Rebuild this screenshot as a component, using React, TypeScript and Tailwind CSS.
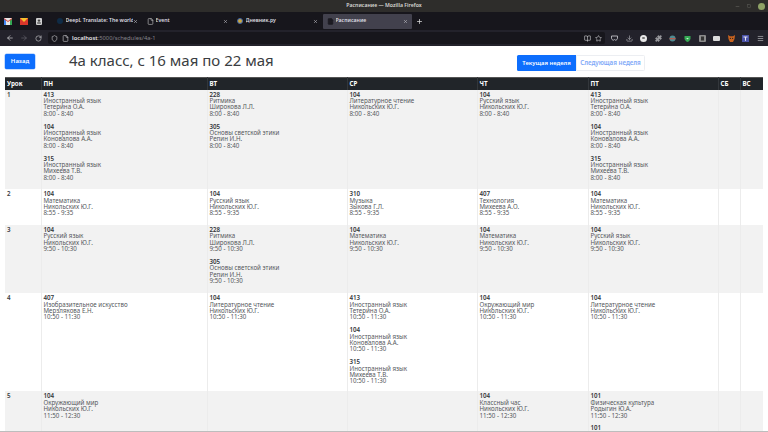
import React from 'react';
import { ArrowLeft, ArrowRight, RotateCw, Shield, File, X, Plus, Star, Download, Menu, Minus, Square, BookOpen, Puzzle } from 'lucide-react';

type E = [string, string, string, string];
const T1 = '8:00 - 8:40', T2 = '8:55 - 9:35', T3 = '9:50 - 10:30', T4 = '10:50 - 11:30', T5 = '11:50 - 12:30';
const N = 'Никольских Ю.Г.';
const rows: { n: string; h: string; c: E[][] }[] = [
  { n: '1', h: 'h-[99.7px]', c: [
    [['413', 'Иностранный язык', 'Тетерина О.А.', T1], ['104', 'Иностранный язык', 'Коновалова А.А.', T1], ['315', 'Иностранный язык', 'Михеева Т.В.', T1]],
    [['228', 'Ритмика', 'Широкова Л.Л.', T1], ['305', 'Основы светской этики', 'Репин И.Н.', T1]],
    [['104', 'Литературное чтение', N, T1]],
    [['104', 'Русский язык', N, T1]],
    [['413', 'Иностранный язык', 'Тетерина О.А.', T1], ['104', 'Иностранный язык', 'Коновалова А.А.', T1], ['315', 'Иностранный язык', 'Михеева Т.В.', T1]],
  ]},
  { n: '2', h: 'h-[35.6px]', c: [
    [['104', 'Математика', N, T2]],
    [['104', 'Русский язык', N, T2]],
    [['310', 'Музыка', 'Зыкова Г.Л.', T2]],
    [['407', 'Технология', 'Михеева А.О.', T2]],
    [['104', 'Математика', N, T2]],
  ]},
  { n: '3', h: 'h-[68.4px]', c: [
    [['104', 'Русский язык', N, T3]],
    [['228', 'Ритмика', 'Широкова Л.Л.', T3], ['305', 'Основы светской этики', 'Репин И.Н.', T3]],
    [['104', 'Математика', N, T3]],
    [['104', 'Математика', N, T3]],
    [['104', 'Русский язык', N, T3]],
  ]},
  { n: '4', h: 'h-[98.3px]', c: [
    [['407', 'Изобразительное искусство', 'Мерзлякова Е.Н.', T4]],
    [['104', 'Литературное чтение', N, T4]],
    [['413', 'Иностранный язык', 'Тетерина О.А.', T4], ['104', 'Иностранный язык', 'Коновалова А.А.', T4], ['315', 'Иностранный язык', 'Михеева Т.В.', T4]],
    [['104', 'Окружающий мир', N, T4]],
    [['104', 'Литературное чтение', N, T4]],
  ]},
  { n: '5', h: 'h-[40px]', c: [
    [['104', 'Окружающий мир', N, T5]],
    [],
    [],
    [['104', 'Классный час', N, T5]],
    [['101', 'Физическая культура', 'Родыгин Ю.А.', T5], ['101', 'Физическая культура', 'Родыгин Ю.А.', T5]],
  ]},
];

const widths = ['w-[36px]', 'w-[166px]', 'w-[140px]', 'w-[130px]', 'w-[111px]', 'w-[130px]', 'w-[22px]', 'w-[23px]'];
const heads = ['Урок', 'ПН', 'ВТ', 'СР', 'ЧТ', 'ПТ', 'СБ', 'ВС'];

function Tab({ title, icon, active }: { title: string; icon: React.ReactNode; active?: boolean }) {
  return (
    <div className={`w-[89px] h-[15px] flex items-center pl-[3px] pr-[4.5px] rounded-[1px] ${active ? 'bg-[#42414d]' : ''}`}>
      <span className="w-[8px] h-[8px] flex items-center justify-center mr-[1.5px] shrink-0">{icon}</span>
      <span className="flex-1 overflow-hidden whitespace-nowrap text-[5.2px] font-semibold text-[#dcdce0]">{title}</span>
      <X size={5} strokeWidth={2.5} className="text-[#c5c5ca] shrink-0" />
    </div>
  );
}

function Exts() {
  return (
    <div className="flex-1 flex items-center justify-between pl-[6px] pr-[1px]">
      <svg width="7" height="6" viewBox="0 0 7 6"><path d="M.5 1h6v2.2c0 1-1 2-2 2-.6 0-.8-.8-1-.8s-.4.8-1 .8c-1 0-2-1-2-2z" fill="none" stroke="#c0c0c5" strokeWidth=".9" /></svg>
      <Download size={7} className="text-[#b9b9bd]" />
      <span className="w-[7px] h-[7px] rounded-full bg-[#e8e8e8] flex items-center justify-center"><span className="w-[2.5px] h-[2.5px] rounded-full bg-[#777]" /></span>
      <Puzzle size={7} fill="#9a9a9e" className="text-[#9a9a9e]" />
      <svg width="7" height="7" viewBox="0 0 7 7"><circle cx="3.5" cy="3.5" r="3" fill="#4f8a92" /><rect x=".5" y="3" width="6" height="1.3" fill="#b65b4e" /></svg>
      <svg width="7" height="7" viewBox="0 0 7 7"><path d="M.5 1h6v2.5C6.5 5 5 6.4 3.5 7 2 6.4.5 5 .5 3.5z" fill="#35a853" /><path d="M2.2 3l1.3 1.6L4.8 3z" fill="#c9eed2" /></svg>
      <svg width="7" height="7" viewBox="0 0 7 7"><rect width="7" height="7" rx="1" fill="#8b8b8b" /><rect x="2" y="1.5" width="3" height="4" fill="#333" /></svg>
      <span className="w-[7px] h-[5px] rounded-[1px] bg-[#dcdcdc]" />
      <svg width="7" height="7" viewBox="0 0 7 7"><path d="M0 0l2 1.3h3L7 0l-.5 4L5 7H2L.5 4z" fill="#c9631f" /><circle cx="2.4" cy="3.4" r=".6" fill="#3a2a1c" /><circle cx="4.6" cy="3.4" r=".6" fill="#3a2a1c" /></svg>
      <svg width="7" height="7" viewBox="0 0 7 7"><rect width="7" height="7" fill="#4a52a8" /><path d="M1.5 1.5h4v1H4v3.2H3V2.5H1.5z" fill="#e8e8f4" /></svg>
      <Menu size={7} className="text-[#cfcfd2]" />
    </div>
  );
}

export default function App() {
  return (
    <div className="w-[768px] h-[432px] overflow-hidden bg-white flex flex-col font-['Noto_Sans','Open_Sans',sans-serif] border-b border-[#bdbdbd]">
      {/* title bar */}
      <div className="h-[12px] shrink-0 bg-[#2e2d2b] flex items-center justify-end relative pr-[3px] gap-[7px]">
        <div className="absolute inset-0 flex items-center justify-center text-[5.2px] font-semibold text-[#d8d8d4]">Расписание — Mozilla Firefox</div>
        <Minus size={5} className="text-[#77766f]" />
        <Square size={4} className="text-[#77766f]" />
        <span className="w-[7px] h-[7px] rounded-full bg-[#8fa266]" />
      </div>
      {/* tabs */}
      <div className="h-[18px] shrink-0 bg-[#17161c] flex items-center">
        <div className="w-[53px] flex items-center pl-[4px] gap-[8px] shrink-0">
          <svg width="8" height="7" viewBox="0 0 8 7"><rect width="8" height="7" fill="#e8e8e8" /><path d="M0 0v7h2V2.5L4 4l2-1.5V7h2V0L4 3z" fill="#d9453a" /><path d="M0 7h2V3L0 1z" fill="#4285f4" /><path d="M6 7h2V1L6 3z" fill="#34a853" /></svg>
          <svg width="8" height="7" viewBox="0 0 8 7"><rect width="8" height="7" fill="#d9362b" /><path d="M0 0l4 4 4-4z" fill="#f5c02e" /></svg>
          <svg width="6" height="7" viewBox="0 0 6 7"><rect width="6" height="7" rx="1" fill="#cfcfcf" /><circle cx="3" cy="2.6" r="1.2" fill="#444" /><rect x="1.2" y="4.4" width="3.6" height="1.2" fill="#444" /></svg>
        </div>
        <div className="flex items-center gap-[1px]">
          <Tab title="DeepL Translate: The world" icon={<span className="w-[6px] h-[6px] rounded-full bg-[#0f2b46]" />} />
          <Tab title="Event" icon={<File size={7} className="text-[#cfcfcf]" />} />
          <Tab title="Дневник.ру" icon={<span className="w-[6px] h-[6px] rounded-full bg-[#c9a640] border-[1.5px] border-[#3c63b0]" />} />
          <Tab title="Расписание" icon={<File size={7} fill="#1c1b22" className="text-[#1c1b22]" />} active />
        </div>
        <Plus size={7} strokeWidth={2.5} className="text-[#e0e0e0] ml-[3.5px]" />
      </div>
      {/* nav */}
      <div className="h-[16px] shrink-0 bg-[#23222b] flex items-center pl-[6px] pr-[3px]">
        <ArrowLeft size={8} className="text-[#d4d4d8]" />
        <ArrowRight size={8} className="text-[#65646c] ml-[6px]" />
        <RotateCw size={7} className="text-[#d4d4d8] ml-[7px]" />
        <div className="w-[557px] h-[12px] ml-[6px] bg-[#17161c] rounded-[2px] flex items-center pl-[2.5px] pr-[3.5px]">
          <Shield size={7} className="text-[#d4d4d8]" />
          <File size={7} className="text-[#d4d4d8] ml-[4px]" />
          <span className="ml-[3.5px] text-[5.8px] font-semibold text-[#e4e4e6]">localhost<span className="font-normal text-[#85848b]">:5000/schedules/4a-1</span></span>
          <span className="flex-1" />
          <BookOpen size={7} className="text-[#d4d4d8]" />
          <Star size={7} className="text-[#d4d4d8] ml-[4px]" />
        </div>
        <Exts />
      </div>
      {/* page */}
      <div className="flex-1 min-h-0 overflow-hidden px-[5px] pt-[8px] text-[#212529]">
        <div className="flex items-start h-[24px]">
          <button className="w-[30px] h-[15px] bg-[#0d6efd] rounded-[1.5px] text-white text-[6px] font-semibold flex items-center justify-center shadow-[0_0_0_0.5px_#8db9fe]">Назад</button>
          <h1 className="ml-[34px] mt-[-1.5px] text-[15px] leading-[14px] font-normal text-[#3a3d41] whitespace-nowrap">4а класс, с 16 мая по 22 мая</h1>
          <div className="ml-auto mr-[118px] mt-[1px] flex h-[16px] font-semibold">
            <span className="w-[59px] bg-[#0d6efd] text-white text-[5.9px] flex items-center justify-center rounded-l-[1.5px]">Текущая неделя</span>
            <span className="w-[69px] bg-white text-[#7ea8f8] text-[6.2px] border border-[#eceef2] flex items-center justify-center rounded-r-[1.5px]">Следующая неделя</span>
          </div>
        </div>
        <table className="table-fixed border-collapse w-[758px] text-[6.2px] leading-[6.4px] mt-[-1px]">
          <colgroup>{widths.map((w, i) => <col key={i} className={w} />)}</colgroup>
          <thead>
            <tr className="bg-[#212529] text-white h-[12px] border-t border-[#555]">
              {heads.map((h, i) => (
                <th key={i} className="text-left font-bold px-[2px] align-middle border-l border-[#33373b] first:border-l-0">{h}</th>
              ))}
            </tr>
          </thead>
          <tbody>
            {rows.map((r, ri) => (
              <tr key={r.n} className={`${r.h} ${ri % 2 === 0 ? 'bg-[#f2f2f2]' : 'bg-white'}`}>
                <td className="align-top px-[2px] pt-[2px] font-semibold text-[#3a3d41]">{r.n}</td>
                {r.c.map((cell, ci) => (
                  <td key={ci} className="align-top px-[2px] pt-[2px] border-l border-[#ececec]">
                    {cell.map((e, ei) => (
                      <div key={ei} className="mb-[6.4px] last:mb-0">
                        <div className="font-semibold text-[#33363a]">{e[0]}</div>
                        <div className="text-[#55585c]">{e[1]}</div>
                        <div className="text-[#55585c]">{e[2]}</div>
                        <div className="text-[#55585c]">{e[3]}</div>
                      </div>
                    ))}
                  </td>
                ))}
                <td className="border-l border-[#ececec]" />
                <td className="border-l border-[#ececec]" />
              </tr>
            ))}
          </tbody>
        </table>
      </div>
    </div>
  );
}
